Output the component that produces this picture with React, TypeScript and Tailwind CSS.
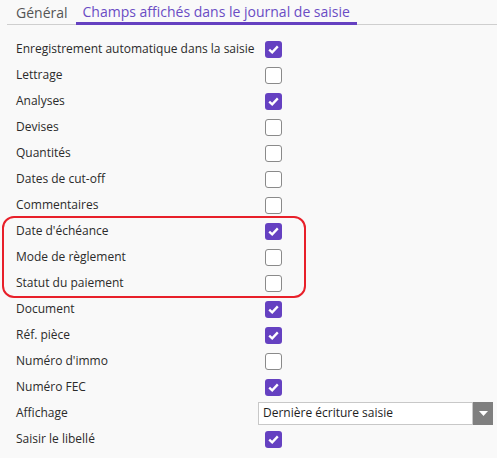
import React, { useState } from 'react';

type Row = { label: string; checked?: boolean; select?: boolean };

const rows: Row[] = [
  { label: 'Enregistrement automatique dans la saisie', checked: true },
  { label: 'Lettrage', checked: false },
  { label: 'Analyses', checked: true },
  { label: 'Devises', checked: false },
  { label: 'Quantités', checked: false },
  { label: 'Dates de cut-off', checked: false },
  { label: 'Commentaires', checked: false },
  { label: "Date d'échéance", checked: true },
  { label: 'Mode de règlement', checked: false },
  { label: 'Statut du paiement', checked: false },
  { label: 'Document', checked: true },
  { label: 'Réf. pièce', checked: true },
  { label: "Numéro d'immo", checked: false },
  { label: 'Numéro FEC', checked: true },
  { label: 'Affichage', select: true },
  { label: 'Saisir le libellé', checked: true },
];

const Checkbox: React.FC<{ checked: boolean; onToggle: () => void }> = ({ checked, onToggle }) => (
  <button
    onClick={onToggle}
    className={
      checked
        ? 'ml-[7px] w-[17px] h-[17px] rounded-[3px] bg-[#6541c1] flex items-center justify-center'
        : 'ml-[7px] w-[17px] h-[17px] rounded-[3px] bg-white border border-[#8a8a8a]'
    }
  >
    {checked && (
      <svg width="11" height="9" viewBox="0 0 11 9">
        <path d="M1.2 4.6 L4.2 7.4 L9.8 1.4" fill="none" stroke="white" strokeWidth="2.3" />
      </svg>
    )}
  </button>
);

const SettingRow: React.FC<{ row: Row; value: boolean; onToggle: () => void }> = ({ row, value, onToggle }) => (
  <div className="flex items-center h-[26px] pl-4">
    <span className="w-[242px] whitespace-nowrap text-[12px] text-[#2b2b2b]">{row.label}</span>
    {row.select ? (
      <div className="flex h-[23px] w-[235px]">
        <div className="flex-1 bg-white border border-[#c8c8c8] flex items-center pl-[4px] text-[12px] text-[#1e1e1e]">
          Dernière écriture saisie
        </div>
        <div className="w-[20px] bg-[#7f7f7f] flex items-center justify-center">
          <svg width="9" height="5" viewBox="0 0 9 5">
            <path d="M0 0 H9 L4.5 5 Z" fill="white" />
          </svg>
        </div>
      </div>
    ) : (
      <Checkbox checked={value} onToggle={onToggle} />
    )}
  </div>
);

export default function App() {
  const [values, setValues] = useState<boolean[]>(rows.map(r => !!r.checked));
  const toggle = (i: number) => setValues(v => v.map((x, j) => (j === i ? !x : x)));

  const renderRow = (i: number) => (
    <SettingRow key={i} row={rows[i]} value={values[i]} onToggle={() => toggle(i)} />
  );

  return (
    <div
      className="w-[497px] h-[458px] bg-[#f9f9f9] overflow-hidden"
      style={{ fontFamily: '"Open Sans", sans-serif' }}
    >
      <div className="flex items-end h-[25px] ml-[7px] border-b border-[#cfcfcf]">
        <div className="px-[9px] pb-[1px] text-[14px] text-[#555] leading-[20px]">Général</div>
        <div className="-ml-px px-[7px] text-[14px] text-[#6a4cc4] leading-[20px] border-b-[3px] border-[#6541c1] -mb-px">
          Champs affichés dans le journal de saisie
        </div>
      </div>

      <div className="mt-[11px]">
        {[0, 1, 2, 3, 4, 5, 6].map(renderRow)}
        <div className="relative">
          <span className="absolute left-[2px] w-[304px] -top-[2px] -bottom-[2px] border-2 border-[#e8202a] rounded-[12px] pointer-events-none" />
          {[7, 8, 9].map(renderRow)}
        </div>
        {[10, 11, 12, 13, 14, 15].map(renderRow)}
      </div>
    </div>
  );
}
